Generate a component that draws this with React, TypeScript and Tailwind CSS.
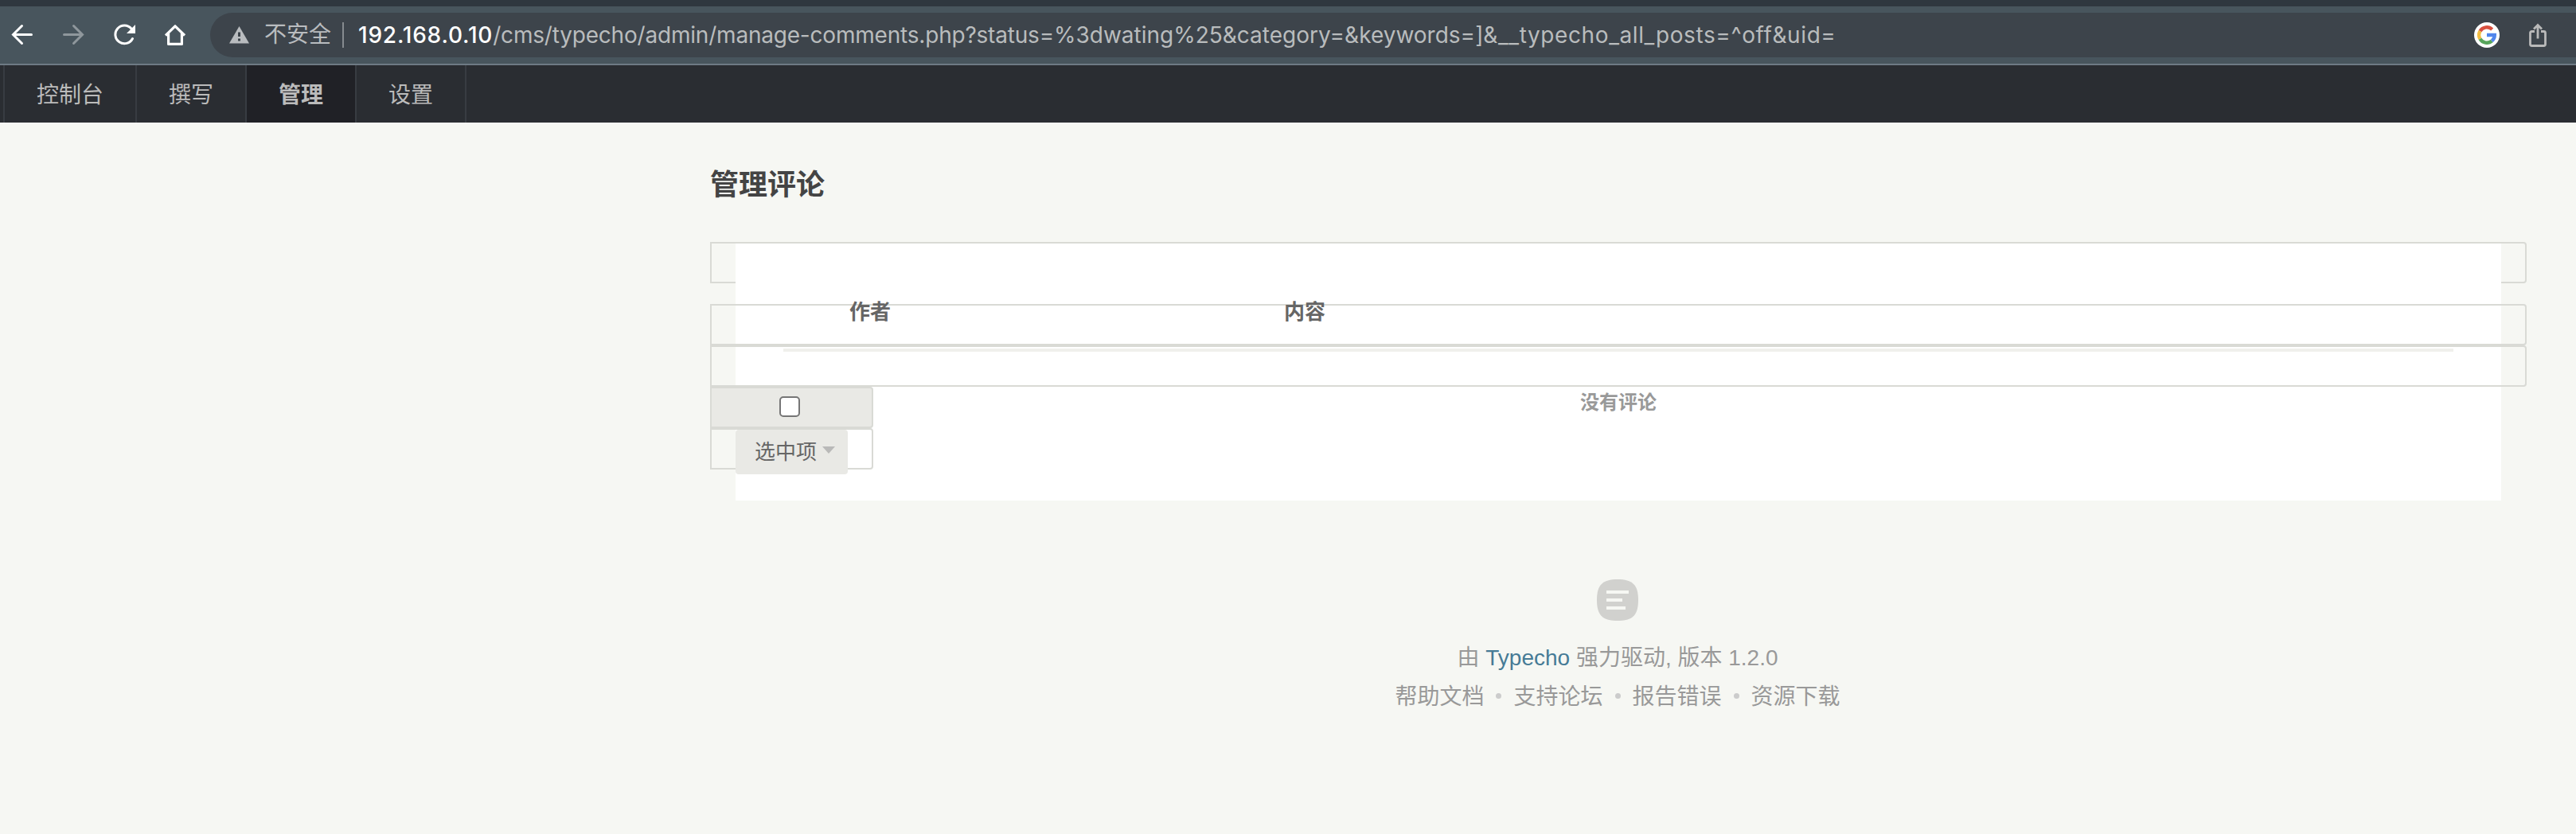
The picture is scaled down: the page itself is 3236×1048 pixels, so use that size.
import React from "react";

const cjk = "font-['Liberation_Sans','Noto_Sans_CJK_SC',sans-serif]";

function Toolbar() {
  return (
    <div className="flex h-[82px] items-center border-t-8 border-b-2 border-t-[#2f373f] border-b-[#6e7a84] bg-[#48555d]">
      <div className="flex w-[264px] shrink-0 items-center">
        <svg className="ml-3.5 h-8 w-7" viewBox="0 0 28 32" fill="none" stroke="#fff" strokeWidth="3" strokeLinecap="round">
          <path d="M25.500 15.500H3M13.500 4.500L2.500 15.500L13.500 26.500" />
        </svg>
        <svg className="ml-[37px] h-8 w-7" viewBox="0 0 28 32" fill="none" stroke="#8f979c" strokeWidth="3" strokeLinecap="round">
          <path d="M1.500 15.500H24M13.500 4.500L24.500 15.500L13.500 26.500" />
        </svg>
        <svg className="ml-9 h-8 w-7" viewBox="0 0 28 32" fill="none">
          <path d="M22 8A11.400 11.400 0 1 0 23.500 20.500" stroke="#fff" strokeWidth="3" strokeLinecap="round" />
          <path d="M27 3V14H16Z" fill="#fff" />
        </svg>
        <svg className="ml-9 h-8 w-7" viewBox="0 0 28 32" fill="none" stroke="#fff" strokeWidth="3.200" strokeLinejoin="round">
          <path d="M1 16.500L13 4.800L25 16.500M4.600 14V27.400H21.400V14" />
        </svg>
      </div>
      <div className="flex h-14 flex-1 items-center rounded-l-full bg-[#3d444b]">
        <svg className="ml-6 h-[22px] w-[26px]" viewBox="0 0 26 22">
          <path d="M12.500 0L25 21.500H0Z" fill="#b9bcbf" />
          <path d="M11 7.500h3v5.500h-3zM11 15.500h3v3h-3z" fill="#3d444b" />
        </svg>
        <span className={`ml-[18px] text-[28px] leading-none text-[#b9bcbf] ${cjk}`}>不安全</span>
        <span className="ml-3.5 h-8 w-0.5 bg-[#868b8f]" />
        <span className="ml-[18px] w-[1853px] whitespace-nowrap font-['Inter',sans-serif] text-[28px] leading-none text-[#b9bcbd]">
          <span className="font-medium tracking-[0.800px] text-white">192.168.0.10</span>
          <span className="tracking-[-0.200px]">/cms/typecho/admin/manage-comments.php?status=</span>
          <span>%3dwating%25&amp;category=&amp;keywords=]</span>
          <span className="tracking-[0.600px]">&amp;__typecho_all_posts=^off&amp;uid=</span>
        </span>
        <span className="ml-auto flex size-8 items-center justify-center rounded-full bg-white">
          <svg className="size-6" viewBox="0 0 24 24" fill="none" strokeWidth="4.400">
            <path d="M18.700 5A9.800 9.800 0 0 0 3.500 7.100" stroke="#d9503f" />
            <path d="M3.500 7.100A9.800 9.800 0 0 0 3.500 16.900" stroke="#f2bd42" />
            <path d="M3.500 16.900A9.800 9.800 0 0 0 18.300 19.500" stroke="#58a55c" />
            <path d="M18.300 19.500A9.800 9.800 0 0 0 21.800 12H12" stroke="#5186ec" />
          </svg>
        </span>
        <svg className="mr-8 ml-8 h-8 w-8" viewBox="0 0 32 32" fill="none" stroke="#b9b9b9" strokeWidth="2.800">
          <path d="M12 11.500H8.500Q6.500 11.500 6.500 13.500V27.500Q6.500 29.500 8.500 29.500H23.500Q25.500 29.500 25.500 27.500V13.500Q25.500 11.500 23.500 11.500H20M16 20.500V4M11 8.500L16 3.500L21 8.500" />
        </svg>
      </div>
    </div>
  );
}

function NavItem({ label, active = false }: { label: string; active?: boolean }) {
  return (
    <a
      className={`flex h-full items-center border-r-2 border-[#383c42] px-10 pt-[3px] text-[28px] leading-none text-[#bbb] ${
        active ? "bg-[#202126] font-bold" : ""
      }`}
    >
      {label}
    </a>
  );
}

function Navigation() {
  return (
    <nav className="flex h-[72px] bg-[#2a2d32] pl-1">
      <div className="flex border-l-2 border-[#383c42]">
        <NavItem label="控制台" />
        <NavItem label="撰写" />
        <NavItem label="管理" active />
        <NavItem label="设置" />
      </div>
    </nav>
  );
}

const box = "h-[52px] border-2 border-[#d9dad5]";

function Comments() {
  return (
    <section className="mt-[43px] grid w-[2282px]">
      <div className={`rounded-r-[4px] [grid-area:1/1] ${box}`} />
      <div className="mx-8 mt-0.5 h-[323px] bg-white [grid-area:1/1]" />
      <div className="pt-[78px] [grid-area:1/1]">
        <div className={`rounded-r-[4px] ${box}`} />
        <div className={`rounded-r-[4px] ${box}`} />
        <div className={`flex w-[205px] items-center justify-center rounded-r-[4px] bg-[#e9e9e5] pr-1.5 pb-0.5 ${box}`}>
          <span className="size-[26px] rounded-[5px] border-2 border-[#767676] bg-white" />
        </div>
        <div className={`w-[205px] rounded-r-[4px] pl-[30px] ${box}`}>
          <button className="flex h-14 w-[141px] items-center rounded-[4px] bg-[#e9e9e5] pl-6 text-[26px] leading-none text-[#666]">
            选中项
            <svg className="mt-[-5px] ml-[7px] h-[9px] w-4" viewBox="0 0 16 9">
              <path d="M0 0H16L8 9Z" fill="#b9b9b8" />
            </svg>
          </button>
        </div>
      </div>
      <div className="mx-[92px] pt-[66px] [grid-area:1/1]">
        <div className="flex h-[72px] border-b-4 border-[#f0f0ec] pt-[5px] pl-[83px] text-[26px] leading-[34px] font-bold text-[#666]">
          <span className="w-[546px]">作者</span>
          <span>内容</span>
        </div>
        <p className="pt-[47px] text-center text-[24px] leading-[34px] font-bold text-[#999]">没有评论</p>
      </div>
    </section>
  );
}

function Dot() {
  return <span className="mx-[15px] mb-[3px] size-[7px] rounded-full bg-[#ccc]" />;
}

function Footer() {
  return (
    <footer className="mt-[99px] flex w-[2280px] flex-col items-center text-[28px] leading-[50px] text-[#999]">
      <svg className="h-[52px] w-[52px]" viewBox="0 0 52 52">
        <path d="M26 0C45 0 52 7 52 26S45 52 26 52S0 45 0 26S7 0 26 0Z" fill="#d1d1ce" />
        <path d="M12 14H40V18H12ZM12 24H32V28H12ZM12 34H36V38H12Z" fill="#f6f7f3" />
      </svg>
      <p className="mt-[22px] whitespace-pre">
        由 <a className="text-[#467b96]">Typecho</a> 强力驱动, 版本 1.2.0
      </p>
      <div className="-mt-px flex items-center">
        <a>帮助文档</a>
        <Dot />
        <a>支持论坛</a>
        <Dot />
        <a>报告错误</a>
        <Dot />
        <a>资源下载</a>
      </div>
    </footer>
  );
}

export default function App() {
  return (
    <div className={`min-h-[1048px] w-[3236px] overflow-hidden bg-[#f6f7f3] ${cjk}`}>
      <Toolbar />
      <Navigation />
      <main className="ml-[892px] pt-[51px]">
        <h2 className="text-[36px] leading-[56px] font-bold text-[#444]">管理评论</h2>
        <Comments />
        <Footer />
      </main>
    </div>
  );
}
